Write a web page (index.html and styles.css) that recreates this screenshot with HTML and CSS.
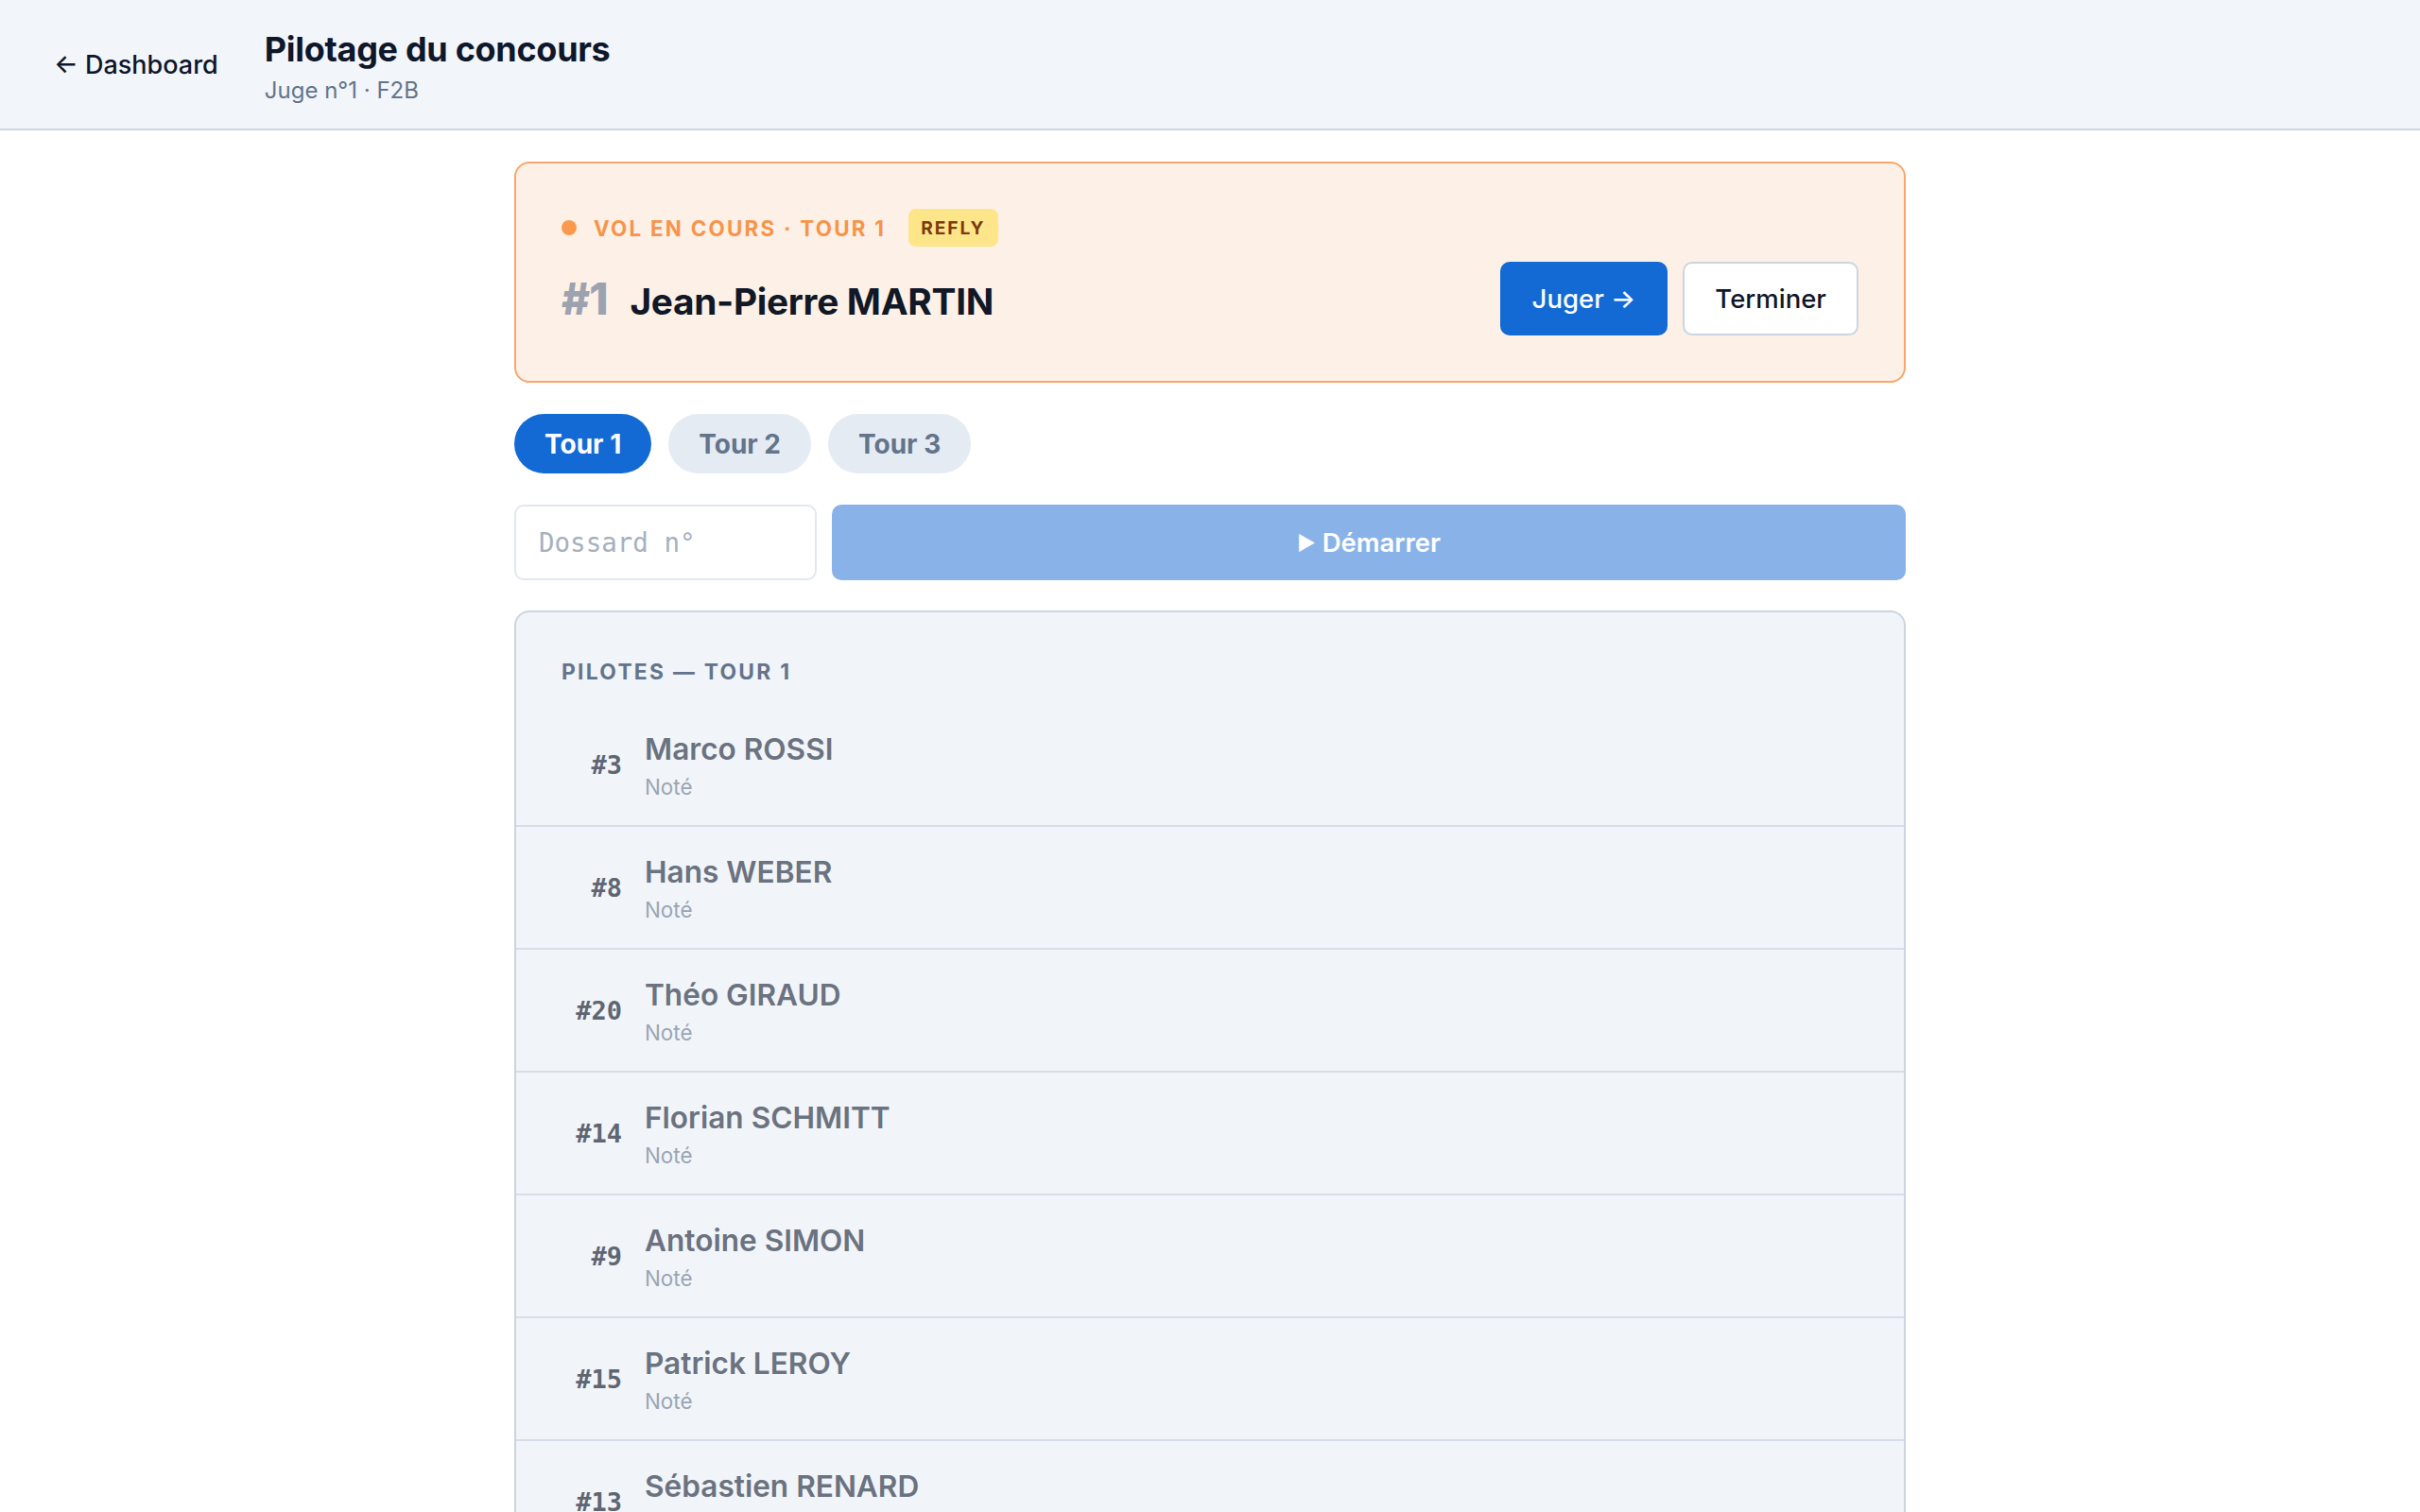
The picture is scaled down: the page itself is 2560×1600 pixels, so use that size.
FILE: index.html
```html
<!DOCTYPE html>
<html lang="fr">
<head>
<meta charset="utf-8">
<title>Pilotage du concours</title>
<link rel="stylesheet" href="styles.css">
</head>
<body>
<header class="topbar">
  <a class="back-link" href="#">← Dashboard</a>
  <div class="topbar-titles">
    <h1 class="page-title">Pilotage du concours</h1>
    <div class="page-sub">Juge n°1 · F2B</div>
  </div>
</header>

<main class="page">
  <section class="live-card">
    <div class="live-status">
      <span class="live-dot"></span>
      <span class="live-label">VOL EN COURS · TOUR 1</span>
      <span class="badge-refly">REFLY</span>
    </div>
    <div class="live-row">
      <div class="live-pilot">
        <span class="live-num">#1</span>
        <span class="live-name">Jean-Pierre MARTIN</span>
      </div>
      <div class="live-actions">
        <button class="btn btn-primary">Juger →</button>
        <button class="btn btn-outline">Terminer</button>
      </div>
    </div>
  </section>

  <nav class="tabs">
    <button class="tab tab-active">Tour 1</button>
    <button class="tab">Tour 2</button>
    <button class="tab">Tour 3</button>
  </nav>

  <form class="start-row">
    <input class="bib-input" type="text" placeholder="Dossard n°">
    <button class="btn-start" type="button" disabled><span class="play">▶</span> Démarrer</button>
  </form>

  <section class="pilot-list">
    <h2 class="list-title">PILOTES — TOUR 1</h2>
    <ul class="rows">
      <li class="row"><span class="row-num">#3</span><div class="row-info"><div class="row-name">Marco ROSSI</div><div class="row-state">Noté</div></div></li>
      <li class="row"><span class="row-num">#8</span><div class="row-info"><div class="row-name">Hans WEBER</div><div class="row-state">Noté</div></div></li>
      <li class="row"><span class="row-num">#20</span><div class="row-info"><div class="row-name">Théo GIRAUD</div><div class="row-state">Noté</div></div></li>
      <li class="row"><span class="row-num">#14</span><div class="row-info"><div class="row-name">Florian SCHMITT</div><div class="row-state">Noté</div></div></li>
      <li class="row"><span class="row-num">#9</span><div class="row-info"><div class="row-name">Antoine SIMON</div><div class="row-state">Noté</div></div></li>
      <li class="row"><span class="row-num">#15</span><div class="row-info"><div class="row-name">Patrick LEROY</div><div class="row-state">Noté</div></div></li>
      <li class="row"><span class="row-num">#13</span><div class="row-info"><div class="row-name">Sébastien RENARD</div><div class="row-state">Noté</div></div></li>
    </ul>
  </section>
</main>
</body>
</html>
```

FILE: styles.css
```css
* { box-sizing: border-box; }

body {
  margin: 0;
  background: #ffffff;
  font-family: Inter, "Noto Sans", "Liberation Sans", sans-serif;
  color: #0f172a;
}

/* ---------- top bar ---------- */
.topbar {
  display: flex;
  align-items: flex-start;
  gap: 49px;
  padding: 30px 57px 24px;
  background: #f2f5fa;
  border-bottom: 2px solid #cbd5e1;
}

.back-link {
  margin-top: 22px;
  line-height: 34px;
  color: #0f172a;
  text-decoration: none;
  font-size: 27px;
  font-weight: 500;
}

.page-title {
  margin: 0;
  font-size: 36px;
  line-height: 44px;
  font-weight: 700;
  letter-spacing: -0.3px;
}

.page-sub {
  margin-top: 6px;
  font-size: 24px;
  line-height: 32px;
  color: #64748b;
}

/* ---------- main column ---------- */
.page {
  max-width: 1472px;
  margin: 0 auto;
  padding-top: 33px;
}

/* ---------- live flight card ---------- */
.live-card {
  background: #fdf0e6;
  border: 2px solid #f9a66c;
  border-radius: 16px;
  padding: 48px;
}

.live-status {
  display: flex;
  align-items: center;
  height: 40px;
}

.live-dot {
  width: 16px;
  height: 16px;
  border-radius: 50%;
  background: #fb9a4f;
  margin-right: 18px;
}

.live-label {
  font-size: 22.4px;
  font-weight: 700;
  letter-spacing: 0.1em;
  color: #f7944a;
}

.badge-refly {
  margin-left: 24px;
  background: #fde68a;
  color: #7c3a10;
  font-size: 19.2px;
  font-weight: 700;
  letter-spacing: 0.1em;
  height: 40px;
  padding: 0 13px;
  display: inline-flex;
  align-items: center;
  border-radius: 8px;
}

.live-row {
  margin-top: 16px;
  display: flex;
  align-items: center;
  justify-content: space-between;
}

.live-pilot {
  display: flex;
  align-items: baseline;
  gap: 24px;
}

.live-num {
  font-size: 46px;
  font-weight: 800;
  color: #9ca3af;
  letter-spacing: -1px;
}

.live-name {
  font-size: 38.8px;
  font-weight: 700;
  color: #111827;
  letter-spacing: -0.3px;
}

.live-actions {
  display: flex;
  gap: 16px;
}

.btn {
  height: 78px;
  padding: 0 32px;
  font-family: inherit;
  font-size: 27.5px;
  font-weight: 500;
  border-radius: 10px;
  cursor: pointer;
}

.btn-primary {
  background: #136ad5;
  border: 2px solid #136ad5;
  color: #ffffff;
}

.btn-outline {
  background: #ffffff;
  border: 2px solid #cbd5e1;
  color: #0f172a;
}

/* ---------- round tabs ---------- */
.tabs {
  display: flex;
  gap: 18px;
  margin-top: 33px;
}

.tab {
  height: 63px;
  padding: 0 32px;
  border: none;
  border-radius: 999px;
  background: #e5ebf3;
  color: #64748b;
  font-family: inherit;
  font-size: 28px;
  font-weight: 700;
  cursor: pointer;
}

.tab-active {
  background: #136ad5;
  color: #ffffff;
}

/* ---------- start flight row ---------- */
.start-row {
  display: flex;
  gap: 16px;
  margin-top: 33px;
}

.bib-input {
  width: 320px;
  height: 80px;
  padding: 0 24px;
  border: 2px solid #e2e8f0;
  border-radius: 10px;
  background: #ffffff;
  font-family: "DejaVu Sans Mono", "Liberation Mono", monospace;
  font-size: 27.5px;
  color: #0f172a;
}

.bib-input::placeholder {
  color: #a7b0be;
}

.btn-start {
  flex: 1;
  height: 80px;
  border: none;
  border-radius: 10px;
  background: #89b3e8;
  color: #ffffff;
  font-family: inherit;
  font-size: 27.5px;
  font-weight: 600;
}

.play {
  font-size: 21px;
  vertical-align: 2px;
}

/* ---------- pilot list ---------- */
.pilot-list {
  margin-top: 32px;
  background: #f1f5f9;
  border: 2px solid #cbd5e1;
  border-radius: 16px;
  padding-top: 48px;
}

.list-title {
  margin: 0 0 19px 48px;
  font-size: 22.8px;
  line-height: 30px;
  font-weight: 700;
  letter-spacing: 0.1em;
  color: #64748b;
}

.rows {
  list-style: none;
  margin: 0;
  padding: 0;
}

.row {
  display: flex;
  align-items: center;
  gap: 24px;
  padding: 24px 48px;
  border-bottom: 2px solid #d5dde8;
}

.row-num {
  width: 64px;
  text-align: right;
  font-family: "DejaVu Sans Mono", "Liberation Mono", monospace;
  font-size: 27px;
  font-weight: 700;
  color: #5f6673;
}

.row-name {
  font-size: 31.6px;
  line-height: 48px;
  font-weight: 600;
  color: #6b7280;
}

.row-state {
  font-size: 22.4px;
  line-height: 32px;
  color: #9aa5b5;
}
```
